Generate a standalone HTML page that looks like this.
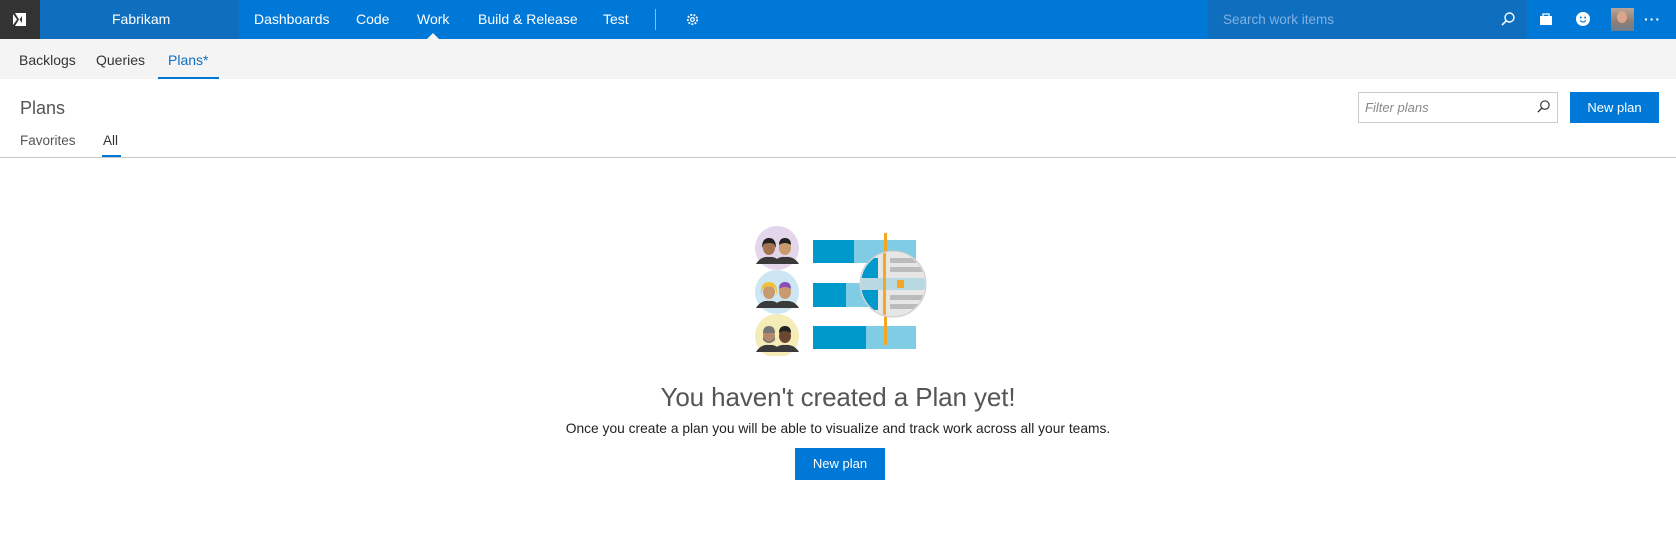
<!DOCTYPE html>
<html><head><meta charset="utf-8"><style>
*{margin:0;padding:0;box-sizing:border-box}
body{width:1676px;height:555px;background:#fff;font-family:"Liberation Sans",sans-serif;position:relative;overflow:hidden;color:#333}
.a{position:absolute;white-space:nowrap}
.top{position:absolute;left:0;top:0;width:1676px;height:39px;background:#0078d7}
.nav{color:#fff;font-size:14px;top:11px}
.sub{position:absolute;left:0;top:39px;width:1676px;height:40px;background:#f4f4f4}
.sn{font-size:14px;top:52px;color:#333}
.btn{background:#0078d7;color:#fff;font-size:13px;text-align:center}
</style></head><body>
<div class="top"></div>
<div class="a" style="left:0;top:0;width:40px;height:39px;background:#333">
<svg width="40" height="39" viewBox="0 0 40 39"><path d="M13 14 L17 19.5 L13 25 Z M15 13 L19 19.5 L15 26 L26 26 L26 13 Z M22 16 L22 23 L19.5 19.5 Z" fill="#fff" fill-rule="evenodd"/></svg></div>
<div class="a" style="left:40px;top:0;width:199px;height:39px;background:#106ebe"></div>
<div class="a nav" style="left:112px">Fabrikam</div>
<div class="a nav" style="left:254px">Dashboards</div>
<div class="a nav" style="left:356px">Code</div>
<div class="a nav" style="left:417px">Work</div>
<div class="a" style="left:427px;top:33px;width:0;height:0;border-left:6px solid transparent;border-right:6px solid transparent;border-bottom:6px solid #f4f4f4"></div>
<div class="a nav" style="left:478px">Build &amp; Release</div>
<div class="a nav" style="left:603px">Test</div>
<div class="a" style="left:655px;top:9px;width:1px;height:21px;background:#8cbde8"></div>
<svg class="a" style="left:685px;top:12px" width="15" height="15" viewBox="0 0 16 16"><circle cx="8" cy="8" r="5" fill="none" stroke="#fff" stroke-width="2" stroke-dasharray="2 1.5"/><circle cx="8" cy="8" r="2" fill="none" stroke="#fff" stroke-width="1.3"/></svg>
<div class="a" style="left:1208px;top:0;width:319px;height:39px;background:#106ebe"></div>
<div class="a" style="left:1223px;top:12px;font-size:13.5px;color:#7fb2e4">Search work items</div>
<svg class="a" style="left:1500px;top:11px" width="16" height="16" viewBox="0 0 16 16"><circle cx="9.5" cy="6.5" r="4.5" fill="none" stroke="#fff" stroke-width="1.4"/><path d="M6.3 9.7 L2 14" stroke="#fff" stroke-width="1.6"/></svg>
<svg class="a" style="left:1539px;top:12px" width="14" height="14" viewBox="0 0 14 14"><path d="M1 4 H13 V13 H1 Z" fill="#fff"/><path d="M4 4 V2 H10 V4" fill="none" stroke="#fff" stroke-width="1.3"/></svg>
<svg class="a" style="left:1575px;top:11px" width="16" height="16" viewBox="0 0 16 16"><circle cx="8" cy="8" r="7" fill="#fff"/><circle cx="5.8" cy="6.5" r="1" fill="#0078d7"/><circle cx="10.2" cy="6.5" r="1" fill="#0078d7"/><path d="M5 9.5 Q8 12.5 11 9.5" stroke="#0078d7" fill="none" stroke-width="1.1"/></svg>
<div class="a" style="left:1611px;top:8px;width:23px;height:23px;background:linear-gradient(#b9a597,#8f7d73 60%,#6d7f8f)"><div style="position:absolute;left:6px;top:3px;width:10px;height:12px;border-radius:50%;background:#d9a58b"></div></div>
<div class="a" style="left:1644px;top:11px;color:#fff;font-size:14px;font-weight:bold;letter-spacing:1px">···</div>
<div class="sub"></div>
<div class="a sn" style="left:19px">Backlogs</div>
<div class="a sn" style="left:96px">Queries</div>
<div class="a sn" style="left:168px;color:#106ebe">Plans*</div>
<div class="a" style="left:158px;top:77px;width:61px;height:2px;background:#0078d7"></div>
<div class="a" style="left:20px;top:98px;font-size:18px;color:#555">Plans</div>
<div class="a" style="left:20px;top:133px;font-size:13.5px;color:#555">Favorites</div>
<div class="a" style="left:103px;top:133px;font-size:13.5px;color:#333">All</div>
<div class="a" style="left:102px;top:155px;width:19px;height:2px;background:#0078d7"></div>
<div class="a" style="left:0;top:157px;width:1676px;height:1px;background:#c8c8c8"></div>
<div class="a" style="left:1358px;top:92px;width:200px;height:31px;border:1px solid #ccc"></div>
<div class="a" style="left:1365px;top:100px;font-size:13px;color:#888;font-style:italic">Filter plans</div>
<svg class="a" style="left:1536px;top:99px" width="15" height="15" viewBox="0 0 16 16"><circle cx="9.5" cy="6.5" r="4.5" fill="none" stroke="#333" stroke-width="1.2"/><path d="M6.3 9.7 L2 14" stroke="#333" stroke-width="1.4"/></svg>
<div class="a btn" style="left:1570px;top:92px;width:89px;height:31px;line-height:31px">New plan</div>

<svg class="a" style="left:750px;top:226px" width="180" height="130" viewBox="750 226 180 130">
<defs><clipPath id="c"><circle cx="893" cy="284" r="32"/></clipPath></defs>
<circle cx="777" cy="248" r="22" fill="#e4d6ea"/>
<circle cx="777" cy="292" r="22" fill="#cde6f3"/>
<circle cx="777" cy="336" r="22" fill="#f6ecb8"/>
<g fill="#3a3a3a">
<path d="M756 264 Q761 256 769 257 Q777 256 781 264 Z"/><path d="M773 264 Q777 256 785 257 Q794 256 799 264 Z"/>
<path d="M756 308 Q761 300 769 301 Q777 300 781 308 Z"/><path d="M773 308 Q777 300 785 301 Q794 300 799 308 Z"/>
<path d="M756 352 Q761 344 769 345 Q777 344 781 352 Z"/><path d="M773 352 Q777 344 785 345 Q794 344 799 352 Z"/>
</g>
<ellipse cx="769" cy="248" rx="6" ry="7" fill="#a5744f"/><path d="M762 248 Q762 238 769 238 Q776 238 776 248 L774 244 Q769 242 764 244 Z" fill="#222"/>
<ellipse cx="785" cy="248" rx="6" ry="7" fill="#c89a6d"/><path d="M779 245 Q779 238 785 238 Q791 238 791 245 Q785 241 779 245 Z" fill="#222"/>
<ellipse cx="769" cy="292" rx="6" ry="7" fill="#c89a6d"/><path d="M761 295 Q760 282 769 282 Q778 282 777 295 L775 288 Q769 285 763 288 Z" fill="#f0c23a"/>
<ellipse cx="785" cy="292" rx="6" ry="7" fill="#c89a6d"/><path d="M779 289 Q779 282 785 282 Q791 282 791 289 Q785 285 779 289 Z" fill="#8a4fb8"/>
<ellipse cx="769" cy="336" rx="6" ry="7" fill="#b28a6b"/><path d="M763 333 Q763 326 769 326 Q775 326 775 333 Z" fill="#777"/><path d="M763 337 Q769 346 775 337 L775 340 Q769 346 763 340 Z" fill="#777"/>
<ellipse cx="785" cy="336" rx="6" ry="7" fill="#6b4630"/><path d="M779 333 Q779 326 785 326 Q791 326 791 333 Q785 329 779 333 Z" fill="#222"/>
<rect x="813" y="240" width="41" height="23" fill="#0099cc"/><rect x="854" y="240" width="62" height="23" fill="#80cce5"/>
<rect x="813" y="283" width="33" height="24" fill="#0099cc"/><rect x="846" y="283" width="70" height="24" fill="#80cce5"/>
<rect x="813" y="326" width="53" height="23" fill="#0099cc"/><rect x="866" y="326" width="50" height="23" fill="#80cce5"/>
<rect x="884" y="233" width="3" height="112" fill="#f5a623"/>
<circle cx="893" cy="284" r="33" fill="#e6e6e6" stroke="#ccc" stroke-width="1"/>
<g clip-path="url(#c)">
<rect x="860" y="250" width="18" height="70" fill="#d8e8ee"/>
<rect x="860" y="258" width="18" height="20" fill="#0099cc"/><rect x="860" y="290" width="18" height="20" fill="#0099cc"/>
<rect x="860" y="278" width="70" height="12" fill="#b8d8e2"/>
<rect x="883" y="250" width="3" height="70" fill="#f5a623"/>
<rect x="890" y="258" width="40" height="5" fill="#bbb"/><rect x="890" y="267" width="40" height="5" fill="#bbb"/>
<rect x="890" y="295" width="40" height="5" fill="#bbb"/><rect x="890" y="304" width="40" height="5" fill="#bbb"/>
<rect x="897" y="280" width="7" height="8" fill="#f5a623"/>
</g>
</svg>

<div class="a" style="left:0;width:1676px;top:382px;text-align:center;font-size:26px;color:#555;letter-spacing:-0.1px">You haven't created a Plan yet!</div>
<div class="a" style="left:0;width:1676px;top:421px;text-align:center;font-size:13.8px;color:#222">Once you create a plan you will be able to visualize and track work across all your teams.</div>
<div class="a btn" style="left:795px;top:448px;width:90px;height:32px;line-height:32px">New plan</div>
</body></html>
